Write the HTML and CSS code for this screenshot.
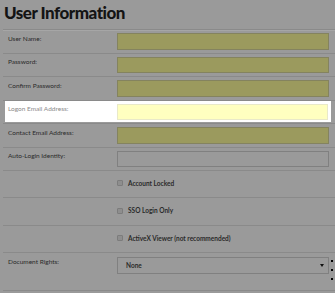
FILE: index.html
```html
<!DOCTYPE html>
<html>
<head>
<meta charset="utf-8">
<link rel="stylesheet" href="styles.css">
</head>
<body>
<div class="page">
  <h1 class="title">User Information</h1>
  <div class="form">
    <div class="row"><div class="label">User Name:</div><div class="field"><div class="input olive"></div></div></div>
    <div class="row"><div class="label">Password:</div><div class="field"><div class="input olive"></div></div></div>
    <div class="row"><div class="label">Confirm Password:</div><div class="field"><div class="input olive"></div></div></div>
    <div class="row row-focus"><div class="hl"><div class="label">Logon Email Address:</div><div class="field"><div class="input yellow"></div></div></div></div>
    <div class="row"><div class="label">Contact Email Address:</div><div class="field"><div class="input olive"></div></div></div>
    <div class="row"><div class="label">Auto-Login Identity:</div><div class="field"><div class="input plain"></div></div></div>
    <div class="row check-row"><div class="label"></div><div class="field check"><span class="box"></span><span class="check-text">Account Locked</span></div></div>
    <div class="row check-row tall"><div class="label"></div><div class="field check"><span class="box"></span><span class="check-text">SSO Login Only</span></div></div>
    <div class="row check-row"><div class="label"></div><div class="field check"><span class="box"></span><span class="check-text">ActiveX Viewer (not recommended)</span></div></div>
    <div class="row select-row"><div class="label">Document Rights:</div><div class="field"><div class="select"><span>None</span><span class="arrow"></span></div></div>
      <span class="dot d1"></span><span class="dot d2"></span><span class="dot d3"></span>
    </div>
  </div>
</div>
</body>
</html>
```

FILE: styles.css
```css
html, body {
  margin: 0;
  padding: 0;
  background: #9a9a9a;
  overflow: hidden;
}
.page {
  width: 335px;
  height: 293px;
  overflow: hidden;
  font-family: Lato, "Open Sans", sans-serif;
}
.title {
  margin: 0;
  padding: 1px 0 0 4px;
  height: 28px;
  box-sizing: border-box;
  font-size: 17px;
  line-height: 23px;
  font-weight: 900;
  letter-spacing: -0.5px;
  color: #141414;
}
.form {
  margin-left: 3px;
  border-top: 1px solid #8a8a8a;
  box-shadow: inset 0 1px 0 #a6a6a6;
  margin-top: 1px;
}
.row {
  position: relative;
  display: grid;
  grid-template-columns: 114px 1fr;
  height: 23.5px;
  padding-top: 3px;
  border-bottom: 1px solid #8a8a8a;
  box-sizing: border-box;
}
.label {
  padding-left: 5px;
  padding-top: 1.5px;
  font-size: 6.5px;
  color: #2a2a2a;
}
.field {
  padding-right: 6px;
}
.input {
  height: 16.5px;
  box-sizing: border-box;
  border: 1px solid #7f7f6a;
}
.olive {
  background: #9b9a5e;
  border-color: #84835f;
}
.plain {
  background: #9a9a9a;
  border-color: #808080;
}
.row-focus {
  display: block;
  padding-top: 0;
}
.row-focus .hl {
  display: grid;
  grid-template-columns: 112px 1fr;
  background: #ffffff;
  margin: 0 4px 0 2px;
  padding: 3px 3px 2px 0;
}
.row-focus .label {
  padding-left: 3px;
  color: #8a8a8a;
}
.row-focus .field {
  padding-right: 0;
}
.yellow {
  background: #ffffc0;
  border-color: #e9e9c9;
}
.check-row {
  height: 27px;
  padding-top: 0;
}
.check-row.tall {
  height: 28px;
}
.check {
  display: flex;
  align-items: center;
  gap: 5px;
  height: 100%;
  padding-bottom: 2px;
  box-sizing: border-box;
}
.box {
  width: 6px;
  height: 6px;
  border: 1px solid #7c7c7c;
  background: #8e8e8e;
  border-radius: 1px;
  box-sizing: border-box;
}
.check-text {
  font-size: 6.5px;
  font-weight: 700;
  color: #2a2a2a;
}
.select-row {
  height: 38px;
  padding-top: 3.5px;
}
.select-row .label {
  padding-top: 1px;
}
.select {
  height: 17.5px;
  box-sizing: border-box;
  border: 1px solid #808080;
  display: flex;
  align-items: center;
  justify-content: space-between;
  padding: 0 4px 0 8px;
  font-size: 6.5px;
  font-weight: 700;
  color: #2a2a2a;
}
.arrow {
  width: 0;
  height: 0;
  border-left: 2px solid transparent;
  border-right: 2px solid transparent;
  border-top: 3.5px solid #111;
}
.dot {
  position: absolute;
  left: 328px;
  width: 2px;
  height: 2px;
  background: #000;
}
.d1 { top: 7px; }
.d2 { top: 16px; }
.d3 { top: 25px; }
```
